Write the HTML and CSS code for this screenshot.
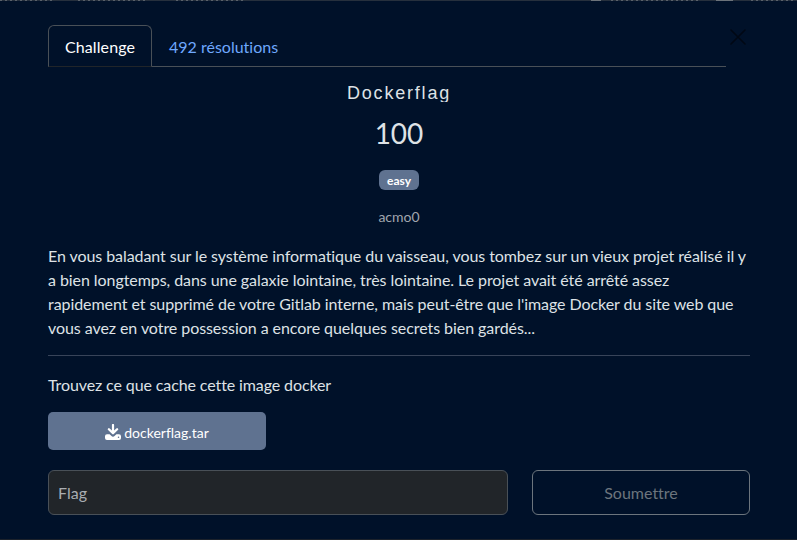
FILE: index.html
```html
<!DOCTYPE html>
<html lang="fr">
<head>
<meta charset="utf-8">
<title>Dockerflag</title>
<link rel="stylesheet" href="styles.css">
</head>
<body>
<main class="modal">
  <button class="close" aria-label="Fermer"><svg viewBox="0 0 16 16"><path d="M1 1 15 15M15 1 1 15"/></svg></button>
  <nav class="tabs">
    <a class="tab active">Challenge</a>
    <a class="tab">492 résolutions</a>
  </nav>
  <h2 class="name">Dockerflag</h2>
  <h3 class="value">100</h3>
  <div class="tags"><span class="badge">easy</span></div>
  <div class="author">acmo0</div>
  <p class="desc">En vous baladant sur le système informatique du vaisseau, vous tombez sur un vieux projet réalisé il y a bien longtemps, dans une galaxie lointaine, très lointaine. Le projet avait été arrêté assez rapidement et supprimé de votre Gitlab interne, mais peut-être que l'image Docker du site web que vous avez en votre possession a encore quelques secrets bien gardés...</p>
  <hr class="rule">
  <p class="goal">Trouvez ce que cache cette image docker</p>
  <a class="file"><svg viewBox="0 0 16 16"><path d="M6.900 1a1.100 1.100 0 0 1 2.200 0v5.600l2.200-2.100a1.100 1.100 0 0 1 1.600 1.600L8.800 10.100a1.150 1.150 0 0 1-1.600 0L3.100 6.100a1.100 1.100 0 0 1 1.600-1.600l2.200 2.100zM2 10.200h2.600l1.600 1.600a2.600 2.600 0 0 0 3.600 0l1.600-1.600H14a2 2 0 0 1 2 2V14a2 2 0 0 1-2 2H2a2 2 0 0 1-2-2v-1.800a2 2 0 0 1 2-2zm11.500 2.200a.75.75 0 1 0 0 1.500.75.75 0 1 0 0-1.500z"/></svg><span>dockerflag.tar</span></a>
  <form class="submit-row">
    <input class="flag" type="text" placeholder="Flag">
    <button class="submit" type="button">Soumettre</button>
  </form>
</main>
</body>
</html>
```
FILE: styles.css
```css
* { box-sizing: border-box; }
body {
  margin: 0;
  height: 540px;
  overflow: hidden;
  background: #001129;
  color: #dee2e6;
  font: 16px/24px Lato, sans-serif;
  font-variant-ligatures: none;
}
.modal {
  position: relative;
  height: 540px;
  padding: 25px 47px 0 48px;
  border-bottom: 1px solid #1c222b;
}
/* edge of the page behind the dialog */
.modal::before {
  content: "";
  position: absolute;
  inset: 0 0 auto;
  height: 1px;
  background:
    repeating-linear-gradient(90deg, #59616a 0 2px, transparent 2px 5px) 0 0 / 52px 1px no-repeat,
    repeating-linear-gradient(90deg, #59616a 0 2px, transparent 2px 5px) 78px 0 / 70px 1px no-repeat,
    repeating-linear-gradient(90deg, #59616a 0 2px, transparent 2px 5px) 176px 0 / 68px 1px no-repeat,
    linear-gradient(#6c737a, #6c737a) 591px 0 / 10px 1px no-repeat,
    repeating-linear-gradient(90deg, #59616a 0 2px, transparent 2px 5px) 611px 0 / 90px 1px no-repeat,
    linear-gradient(#6c737a, #6c737a) 716px 0 / 17px 1px no-repeat,
    repeating-linear-gradient(90deg, #59616a 0 2px, transparent 2px 5px) 751px 0 / 44px 1px no-repeat,
    #26303d;
}
.close {
  position: absolute;
  top: 29px;
  right: 51px;
  width: 16px;
  height: 16px;
  padding: 0;
  border: 0;
  background: none;
}
.close svg { display: block; width: 16px; height: 16px; }
.close path { stroke: #000814; stroke-width: 1.6; stroke-linecap: round; }
.tabs {
  display: flex;
  height: 42px;
  margin-right: 24px;
  border-bottom: 1px solid #495057;
}
.tab {
  height: 42px;
  padding: 10px 17px 8px;
  color: #6ea8fe;
}
.tab.active {
  width: 104px;
  padding: 9px 16px 7px;
  border: 1px solid #495057;
  border-bottom-color: #212529;
  border-radius: 6px 6px 0 0;
  color: #fff;
  letter-spacing: 0.1px;
}
.name {
  height: 21px;
  margin: 14px 0 0;
  overflow: hidden;
  text-align: center;
  font: 400 18px/24px "Liberation Sans", sans-serif;
  letter-spacing: 1.8px;
}
.value {
  margin: 14px 0 0;
  text-align: center;
  font-size: 28px;
  line-height: 34px;
  font-weight: 400;
}
.tags { height: 20px; margin-top: 20px; display: flex; justify-content: center; }
.badge {
  height: 20px;
  padding: 5px 8px 3px;
  border-radius: 6px;
  background: #5f7290;
  color: #fff;
  font-size: 12px;
  line-height: 12px;
  font-weight: 700;
}
.author {
  margin-top: 16px;
  text-align: center;
  font-size: 14px;
  line-height: 21px;
  color: #a0a6ae;
}
.desc { margin: 17px 0 0; letter-spacing: -0.065px; }
.rule { height: 1px; margin: 15px 0 0; border: 0; background: #384459; }
.goal { margin: 17px 0 0; letter-spacing: -0.11px; }
.file {
  display: flex;
  align-items: center;
  justify-content: center;
  gap: 3px;
  width: 218px;
  height: 38px;
  margin-top: 15px;
  padding-top: 3px;
  border-radius: 5px;
  background: #5f7290;
  color: #fff;
  font-size: 14px;
}
.file svg { width: 16px; height: 16px; margin-top: -2px; fill: #fff; }
.submit-row { display: flex; gap: 24px; margin-top: 20px; }
.flag, .submit {
  height: 45px;
  border-radius: 6px;
  font: 16px/24px Lato, sans-serif;
  font-variant-ligatures: none;
}
.flag {
  width: 460px;
  padding: 0 9px;
  border: 1px solid #495057;
  background: #212529;
  color: #dee2e6;
}
.flag::placeholder { color: #a9adb1; opacity: 1; }
.submit {
  width: 218px;
  border: 1px solid #6c757d;
  background: none;
  color: #6c757d;
}
```
